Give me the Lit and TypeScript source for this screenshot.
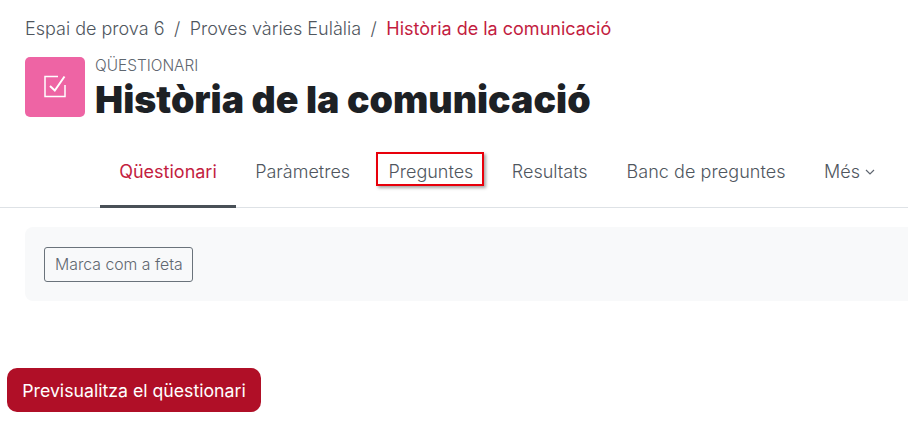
import { LitElement, html, css } from 'lit';
import { customElement } from 'lit/decorators.js';

@customElement('app-root')
export class AppRoot extends LitElement {
  static styles = css`
    :host {
      display: block;
      height: 425px;
      overflow: hidden;
      background: #fff;
      font-family: 'Inter', 'Liberation Sans', sans-serif;
      color: #1d2125;
    }

    .breadcrumb {
      display: flex;
      gap: 9.5px;
      padding: 18px 0 0 25px;
      height: 38px;
      box-sizing: border-box;
      font-size: 18px;
      line-height: 21px;
      font-weight: 300;
      color: #4f565e;
    }

    .breadcrumb .current {
      color: #c31d3f;
      font-weight: 400;
    }

    .header {
      display: flex;
      gap: 10px;
      margin: 19px 0 0 25px;
    }

    .icon {
      width: 60px;
      height: 60px;
      border-radius: 5px;
      background: #ee64a4;
      display: flex;
      align-items: center;
      justify-content: center;
    }

    .label {
      font-size: 15.4px;
      line-height: 18px;
      font-weight: 300;
      color: #5f6770;
    }

    h1 {
      margin: 0;
      padding-top: 2px;
      font-size: 37.5px;
      line-height: 46px;
      font-weight: 900;
    }

    .tabs {
      display: flex;
      margin-top: 12px;
      padding-left: 100px;
      height: 73px;
      box-sizing: border-box;
      border-bottom: 1px solid #dee2e6;
    }

    .tab {
      position: relative;
      display: flex;
      align-items: center;
      gap: 5px;
      padding: 1px 19.2px 0;
      height: 72px;
      box-sizing: border-box;
      font-size: 18px;
      font-weight: 300;
      color: #4f565e;
    }

    .tab.wide {
      padding-left: 19.6px;
      letter-spacing: 0.07px;
    }

    .tab.active {
      color: #c31d3f;
      font-weight: 400;
      box-shadow: inset 0 -3px 0 #495057;
      height: 73px;
      padding-bottom: 1px;
    }

    .tab.marked::after {
      content: '';
      position: absolute;
      left: 7px;
      top: 17px;
      width: 108px;
      height: 34px;
      box-sizing: border-box;
      border: 2px solid #e8000b;
      box-shadow: 2px 2px 3px rgba(0, 0, 0, 0.35);
    }

    .box {
      margin: 19px 0 0 25px;
      height: 74px;
      padding: 20px 19px;
      box-sizing: border-box;
      background: #f8f9fa;
      border-radius: 8px 0 0 8px;
    }

    .done {
      display: inline-block;
      height: 35px;
      padding: 0 9.5px 0 10px;
      box-sizing: border-box;
      border: 1px solid #6a737b;
      border-radius: 3px;
      background: transparent;
      font: inherit;
      font-size: 15.8px;
      font-weight: 300;
      color: #5f6770;
    }

    .preview {
      display: block;
      margin: 67px 0 0 7px;
      width: 254px;
      height: 44px;
      border: 0;
      border-radius: 10px;
      background: #b00f27;
      color: #fff;
      font: inherit;
      font-size: 17.7px;
    }
  `;

  render() {
    return html`
      <div class="breadcrumb">
        <span>Espai de prova 6</span><span>/</span>
        <span>Proves vàries Eulàlia</span><span>/</span>
        <span class="current">Història de la comunicació</span>
      </div>
      <div class="header">
        <div class="icon">
          <svg width="24" height="24" viewBox="0 0 24 24" fill="none" stroke="#fff" stroke-width="1.5">
            <path d="M15 1.5H2v20h20V10" />
            <path d="M7 11l4.8 4.5L21.5 1.5" stroke-width="2" />
          </svg>
        </div>
        <div>
          <div class="label">QÜESTIONARI</div>
          <h1>Història de la comunicació</h1>
        </div>
      </div>
      <nav class="tabs">
        <div class="tab active">Qüestionari</div>
        <div class="tab">Paràmetres</div>
        <div class="tab marked">Preguntes</div>
        <div class="tab">Resultats</div>
        <div class="tab wide">Banc de preguntes</div>
        <div class="tab">
          Més
          <svg width="10" height="6" viewBox="0 0 10 6" fill="none" stroke="#5f6670" stroke-width="1.2">
            <path d="M1 1l4 4 4-4" />
          </svg>
        </div>
      </nav>
      <div class="box"><button class="done">Marca com a feta</button></div>
      <button class="preview">Previsualitza el qüestionari</button>
    `;
  }
}
